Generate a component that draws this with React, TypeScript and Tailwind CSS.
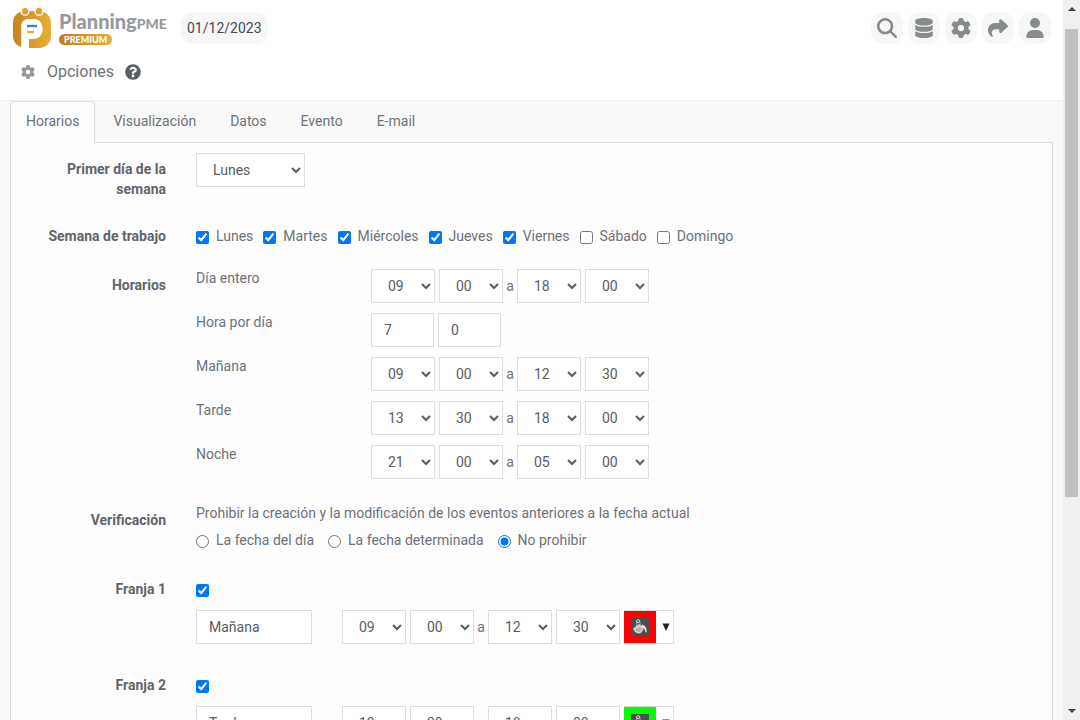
import type { ReactNode } from "react";
import { FaDatabase, FaQuestionCircle } from "react-icons/fa";
import { FaGear, FaMagnifyingGlass, FaShare, FaUser } from "react-icons/fa6";

const pad = (n: number) => String(n).padStart(2, "0");
const HOURS = Array.from({ length: 24 }, (_, i) => pad(i));
const MINUTES = ["00", "15", "30", "45"];

const field =
  "h-[34px] border border-[#dddde0] bg-white px-3 text-[#5a5c61] outline-none";

function TimeSelect({ label, value, options }: { label: string; value: string; options: string[] }) {
  return (
    <select aria-label={label} defaultValue={value} className={`${field} w-16`}>
      {options.map((o) => (
        <option key={o}>{o}</option>
      ))}
    </select>
  );
}

function TimeRange({ name, times }: { name: string; times: string[] }) {
  return (
    <div className="flex items-center gap-1">
      <TimeSelect label={`${name}: hora inicial`} value={times[0]} options={HOURS} />
      <TimeSelect label={`${name}: minuto inicial`} value={times[1]} options={MINUTES} />
      <span className="flex w-1.5 justify-center leading-5">a</span>
      <TimeSelect label={`${name}: hora final`} value={times[2]} options={HOURS} />
      <TimeSelect label={`${name}: minuto final`} value={times[3]} options={MINUTES} />
    </div>
  );
}

function Row({ label, className = "", children }: { label: ReactNode; className?: string; children: ReactNode }) {
  return (
    <div className="grid grid-cols-[126px_1fr] gap-x-[30px]">
      <div className={`text-right font-bold text-[#62646b] ${className}`}>{label}</div>
      <div>{children}</div>
    </div>
  );
}

function Logo() {
  return (
    <svg viewBox="0 0 38 40" className="h-10 w-[38px]" aria-hidden="true">
      <defs>
        <linearGradient id="gold" x1="0" y1="0" x2="1" y2="0">
          <stop offset="0" stopColor="#c7831f" />
          <stop offset="1" stopColor="#e6b137" />
        </linearGradient>
      </defs>
      <path
        d="M12 3H26C33 3 38 8 38 15V28C38 35 33 40 26 40H16V31H19C26 31 29.500 27 29.500 21C29.500 15 26 11 20 11H16C11 11 8.500 14 8.500 18V39C3 37.500 0 33 0 28V15C0 8 5 3 12 3Z"
        fill="url(#gold)"
      />
      <path
        d="M8.500 40V18C8.500 14 11 11 16 11H20C26 11 29.500 15 29.500 21C29.500 27 26 31 19 31H16V40Z"
        fill="#fff"
      />
      <path d="M7.500 0H16.500V4A4.500 4 0 0 1 7.500 4ZM21.500 0H30.500V4A4.500 4 0 0 1 21.500 4Z" fill="#fbf3e2" />
      <path d="M9 3A3 3 0 0 1 15 3V4A3 2.600 0 0 1 9 4ZM23 3A3 3 0 0 1 29 3V4A3 2.600 0 0 1 23 4Z" fill="#dca236" />
      <path d="M14 18H24" stroke="#2a86cf" strokeWidth="2.400" />
      <path d="M14 24H21" stroke="#e6b137" strokeWidth="2.400" />
    </svg>
  );
}

function PaintIcon() {
  return (
    <svg viewBox="0 0 18 18" className="size-[18px]" aria-hidden="true">
      <rect width="18" height="18" fill="#4b4f54" />
      <path d="M2 10.500L8 6L13 9.500C12.500 12 11 14.500 9 15.500C6 16 3 14 2 10.500Z" fill="#d2cfcb" />
      <path d="M4 11.500L8.500 9L11 10.500L8.500 14L6 13.500Z" fill="#c9a79c" />
      <path d="M5.500 8V4M9 7V4" stroke="#b8b8b8" strokeWidth="0.800" />
      <circle cx="7.200" cy="3.200" r="1.500" fill="none" stroke="#e3e3e3" strokeWidth="1" />
      <path d="M10 6.500C14 7 16 9.500 15.500 14.500C13.500 14 14.500 10.500 12 9.500Z" fill="#f0eeea" />
    </svg>
  );
}

const DAYS = [
  { name: "Lunes", on: true },
  { name: "Martes", on: true },
  { name: "Miércoles", on: true },
  { name: "Jueves", on: true },
  { name: "Viernes", on: true },
  { name: "Sábado", on: false },
  { name: "Domingo", on: false },
];

const RULES = ["La fecha del día", "La fecha determinada", "No prohibir"];

const SLOTS = [
  { id: "Franja 1", name: "Mañana", times: ["09", "00", "12", "30"], color: "bg-[#ff0000]" },
  { id: "Franja 2", name: "Tarde", times: ["13", "30", "18", "00"], color: "bg-[#00ff00]" },
];

const TOOLS = [
  { label: "Buscar", icon: <FaMagnifyingGlass /> },
  { label: "Recursos", icon: <FaDatabase /> },
  { label: "Opciones", icon: <FaGear /> },
  { label: "Compartir", icon: <FaShare /> },
  { label: "Usuario", icon: <FaUser /> },
];

function Period({ name, children }: { name: string; children: ReactNode }) {
  return (
    <div className="grid h-11 grid-cols-[175px_1fr] items-start">
      <span className="leading-5">{name}</span>
      <div className="pt-px">{children}</div>
    </div>
  );
}

export default function App() {
  return (
    <div className="flex h-screen overflow-hidden bg-[#f9f9f9] font-['Roboto',sans-serif] text-sm text-[#6e7177]">
      <div className="min-w-0 flex-1 overflow-hidden">
        <header className="h-[101px] border-b border-[#f1f1f1] bg-white pt-[7px] pr-3 pl-[13px]">
          <div className="flex h-[42px] items-center">
            <a href="#" aria-label="PlanningPME Premium" className="flex items-center gap-2">
              <Logo />
              <span className="flex w-[108px] flex-col items-start">
                <span className="flex items-baseline font-['Lato',sans-serif] text-xl leading-5 font-black text-[#97999d]">
                  Planning<span className="text-sm leading-5 font-black">PME</span>
                </span>
                <span className="flex h-[11px] items-center rounded-full bg-linear-to-r from-[#c27a1c] to-[#e6b137] px-[5px] font-['Lato',sans-serif] text-[9px] leading-[11px] font-black text-white">
                  PREMIUM
                </span>
              </span>
            </a>
            <button className="ml-3.5 h-8 rounded-xl bg-[#f7f7f7] px-1.5 text-[#45484d]">01/12/2023</button>
            <nav className="ml-auto flex gap-[5px]">
              {TOOLS.map((t) => (
                <button
                  key={t.label}
                  aria-label={t.label}
                  className="flex size-8 items-center justify-center rounded-xl bg-[#f7f7f7] text-xl text-[#868b8b]"
                >
                  {t.icon}
                </button>
              ))}
            </nav>
          </div>
          <div className="mt-[13px] flex items-center pl-2">
            <FaGear className="size-3.5 text-[#97999d]" />
            <h1 className="ml-3 text-base leading-5">Opciones</h1>
            <button aria-label="Ayuda" className="ml-[11px] text-base text-[#5b5d65]">
              <FaQuestionCircle />
            </button>
          </div>
        </header>

        <main className="px-2.5">
          <nav className="relative z-10 flex gap-0.5">
            <a
              href="#"
              aria-current="page"
              className="-mb-px rounded-t border border-b-0 border-[#dcdce0] bg-[#fdfdfd] px-[15px] pt-[9px] pb-[11px] leading-5"
            >
              Horarios
            </a>
            {["Visualización", "Datos", "Evento", "E-mail"].map((t) => (
              <a key={t} href="#" className="border border-b-0 border-transparent px-[15px] pt-[9px] pb-[11px] leading-5">
                {t}
              </a>
            ))}
          </nav>

          <form className="border border-[#dcdce0] bg-[#fdfdfd] px-[29px] pt-2.5 pb-10">
            <Row className="pt-1.5 leading-5" label={<label htmlFor="first-day">Primer día de la semana</label>}>
              <select id="first-day" defaultValue="Lunes" className={`${field} w-[109px]`}>
                {DAYS.map((d) => (
                  <option key={d.name}>{d.name}</option>
                ))}
              </select>
            </Row>

            <div className="mt-[27px]">
              <Row className="leading-5" label="Semana de trabajo">
                <div className="flex gap-2.5">
                  {DAYS.map((d) => (
                    <label key={d.name} className="flex items-center gap-[7px] leading-5">
                      <input type="checkbox" defaultChecked={d.on} className="mt-0.5 size-[13px]" />
                      {d.name}
                    </label>
                  ))}
                </div>
              </Row>
            </div>

            <div className="mt-[22px]">
              <Row className="pt-[7px] leading-5" label="Horarios">
                <Period name="Día entero">
                  <TimeRange name="Día entero" times={["09", "00", "18", "00"]} />
                </Period>
                <Period name="Hora por día">
                  <div className="flex gap-1">
                    <input aria-label="Horas por día" defaultValue="7" className={`${field} w-[63px]`} />
                    <input aria-label="Minutos por día" defaultValue="0" className={`${field} w-[63px]`} />
                  </div>
                </Period>
                <Period name="Mañana">
                  <TimeRange name="Mañana" times={["09", "00", "12", "30"]} />
                </Period>
                <Period name="Tarde">
                  <TimeRange name="Tarde" times={["13", "30", "18", "00"]} />
                </Period>
                <Period name="Noche">
                  <TimeRange name="Noche" times={["21", "00", "05", "00"]} />
                </Period>
              </Row>
            </div>

            <div className="mt-[15px]">
              <Row className="pt-[7px] leading-5" label="Verificación">
                <p className="leading-5">Prohibir la creación y la modificación de los eventos anteriores a la fecha actual</p>
                <div className="mt-[7px] flex gap-3.5">
                  {RULES.map((r) => (
                    <label key={r} className="flex items-center gap-[7px] leading-5">
                      <input type="radio" name="rule" defaultChecked={r === "No prohibir"} className="mt-0.5 size-[13px]" />
                      {r}
                    </label>
                  ))}
                </div>
              </Row>
            </div>

            <div className="mt-[29px]">
              {SLOTS.map((s) => (
                <div key={s.id} className="h-24">
                  <Row className="leading-5" label={<label htmlFor={s.id}>{s.id}</label>}>
                    <div className="flex h-5 items-center pt-0.5">
                      <input id={s.id} type="checkbox" defaultChecked className="size-[13px]" />
                    </div>
                    <div className="mt-[11px] flex items-center">
                      <input aria-label={`${s.id}: nombre`} defaultValue={s.name} className={`${field} mr-[30px] w-[116px]`} />
                      <TimeRange name={s.id} times={s.times} />
                      <div className="ml-1 flex">
                        <button
                          type="button"
                          aria-label={`${s.id}: color`}
                          className={`flex h-[34px] w-8 items-center justify-center border-y border-[#dddde0] ${s.color}`}
                        >
                          <PaintIcon />
                        </button>
                        <button
                          type="button"
                          aria-label={`${s.id}: elegir color`}
                          className="flex h-[34px] w-[18px] items-center justify-center border border-l-0 border-[#dddde0] bg-white pl-0.5"
                        >
                          <svg viewBox="0 0 8 8" className="size-2" aria-hidden="true">
                            <path d="M0.500 0.500H7.500L4 8Z" fill="#222" />
                          </svg>
                        </button>
                      </div>
                    </div>
                  </Row>
                </div>
              ))}
            </div>
          </form>
        </main>
      </div>

      <aside aria-hidden="true" className="flex w-[17px] flex-col items-center bg-[#f0f0f0]">
        <div className="flex h-[29px] items-start pt-[7px]">
          <svg viewBox="0 0 8 4" className="h-1 w-2">
            <path d="M0 4L4 0L8 4Z" fill="#444" />
          </svg>
        </div>
        <div className="h-[65%] w-[13px] bg-[#c1c1c1]" />
        <svg viewBox="0 0 8 4" className="mt-auto mb-[7px] h-1 w-2">
          <path d="M0 0L4 4L8 0Z" fill="#444" />
        </svg>
      </aside>
    </div>
  );
}
